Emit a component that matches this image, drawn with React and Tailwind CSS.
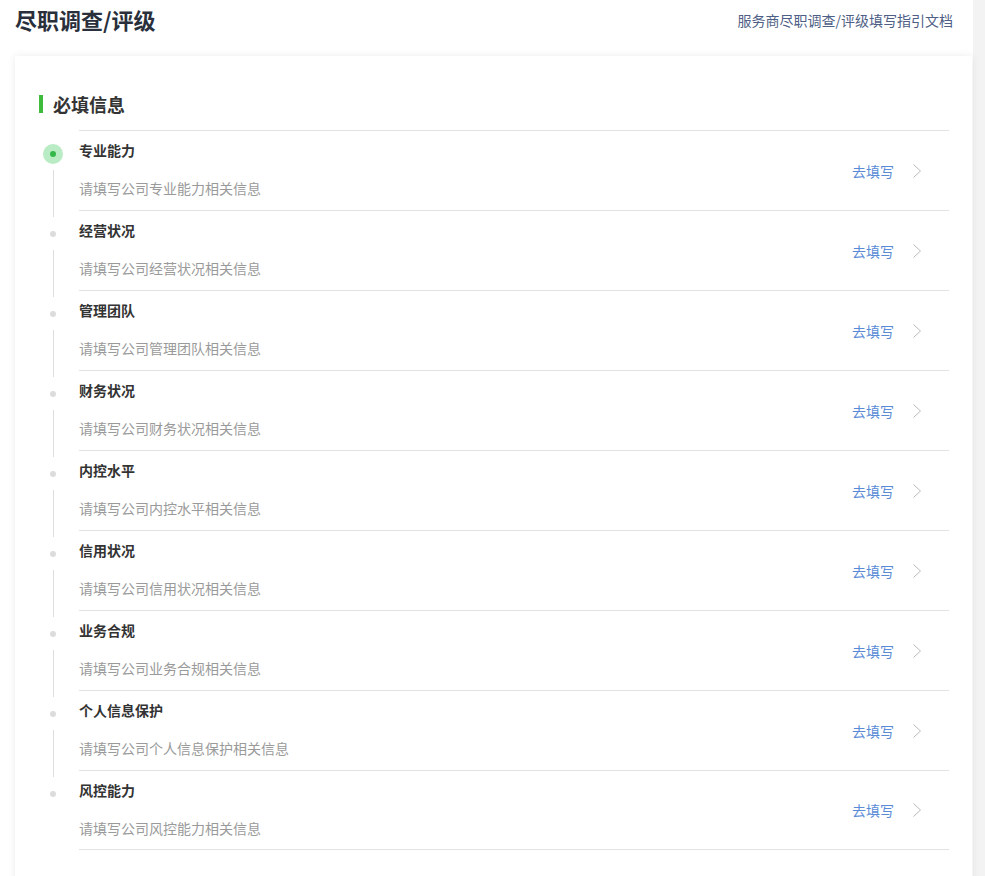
const items = [
  "专业能力",
  "经营状况",
  "管理团队",
  "财务状况",
  "内控水平",
  "信用状况",
  "业务合规",
  "个人信息保护",
  "风控能力",
];

const font = {
  fontFamily: '"Noto Sans CJK SC", "Noto Sans", sans-serif',
};

function Chevron() {
  return (
    <svg width="10" height="16" viewBox="0 0 10 16" fill="none" className="ml-[18px]">
      <polyline points="1.5,1.5 8.5,8 1.5,14.5" stroke="#b8b8b8" strokeWidth="1" />
    </svg>
  );
}

function Row({ title, index, last }) {
  const active = index === 0;
  return (
    <div className="flex h-[80px]">
      <div className="flex w-[40px] shrink-0 flex-col items-start">
        <div className="mt-[14px] flex h-[20px] w-[28px] shrink-0 items-center justify-center">
          {active ? (
            <div className="flex h-[20px] w-[20px] items-center justify-center rounded-full bg-[#b9ecc4]">
              <div className="h-[6px] w-[6px] rounded-full bg-[#34b84a]" />
            </div>
          ) : (
            <div className="h-[6px] w-[6px] rounded-full bg-[#dcdcdc]" />
          )}
        </div>
        {!last && (
          <div className="ml-[13.5px] mt-[6px] h-[47px] w-px shrink-0 bg-[#dedede]" />
        )}
      </div>
      <div
        className={`flex h-[80px] flex-1 items-center justify-between border-t border-[#e2e2e2] ${
          last ? "border-b" : ""
        }`}
      >
        <div className="flex h-full flex-col pt-[9px]">
          <div className="text-[14px] font-bold leading-[20px] text-[#333]">{title}</div>
          <div className="mt-[18px] text-[14px] leading-[20px] text-[#9a9a9a]">
            请填写公司{title}相关信息
          </div>
        </div>
        <div className="flex items-center pr-[27px]">
          <span className="text-[14px] leading-[20px] text-[#5b8bd6]">去填写</span>
          <Chevron />
        </div>
      </div>
    </div>
  );
}

export default function App() {
  return (
    <div className="flex min-h-screen bg-[#f3f3f3]" style={font}>
      <div className="w-[973px] bg-white">
        <div className="flex h-[56px] items-start justify-between pl-[15px] pr-[20px]">
          <h1 className="mt-[4px] text-[22px] font-bold leading-[30px] text-[#2a303b]">
            尽职调查/评级
          </h1>
          <a className="mt-[10px] text-[14px] leading-[20px] text-[#4e5e85]">
            服务商尽职调查/评级填写指引文档
          </a>
        </div>
        <div className="ml-[15px] w-[957px] bg-white pb-[40px] pl-[24px] pr-[23px] pt-[35px] shadow-[0_0_8px_rgba(0,0,0,0.08)]">
          <div className="mb-[13px] flex items-center">
            <div className="h-[18px] w-[4px] bg-[#3dbb3d]" />
            <h2 className="ml-[10px] text-[18px] font-bold leading-[26px] text-[#333]">
              必填信息
            </h2>
          </div>
          <div>
            {items.map((t, i) => (
              <Row key={t} title={t} index={i} last={i === items.length - 1} />
            ))}
          </div>
        </div>
      </div>
    </div>
  );
}
